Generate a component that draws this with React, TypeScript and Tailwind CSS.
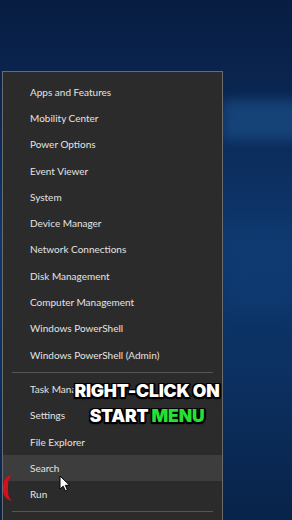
const topItems = [
  "Apps and Features",
  "Mobility Center",
  "Power Options",
  "Event Viewer",
  "System",
  "Device Manager",
  "Network Connections",
  "Disk Management",
  "Computer Management",
  "Windows PowerShell",
  "Windows PowerShell (Admin)",
];

const bottomItems = ["Task Manager", "Settings", "File Explorer", "Search", "Run"];

function Row({ label, active }: { label: string; active?: boolean }) {
  return (
    <div
      className={`flex h-[26.3px] items-center pl-[27px] text-[10px] text-[#e4e4e4] ${
        active ? "bg-[#3d3d3d]" : ""
      }`}
    >
      {label}
    </div>
  );
}

export default function App() {
  return (
    <div
      className="relative flex h-[520px] w-[292px] overflow-hidden bg-[linear-gradient(180deg,#081d42_0%,#0a2753_20%,#0e376c_45%,#0c3163_70%,#082349_100%)] pl-[2px] pt-[71px]"
      style={{ fontFamily: 'Lato, "Open Sans", sans-serif' }}
    >
      {/* lighter bands on the desktop */}
      <div className="absolute left-[222px] top-[100px] h-[40px] w-[80px] bg-[#1a4d86] opacity-70 blur-[6px]" />
      <div className="absolute left-[222px] top-[230px] h-[80px] w-[80px] bg-[#0f3d76] opacity-60 blur-[10px]" />

      {/* context menu */}
      <div className="relative flex h-[460px] w-[221px] flex-col border border-[#6b6b6b] bg-[#2b2b2b] pt-[7px]">
        {topItems.map((t) => (
          <Row key={t} label={t} />
        ))}
        <div className="mx-[9px] mb-[3px] mt-[4px] h-px bg-[#555]" />
        {bottomItems.map((t) => (
          <Row key={t} label={t} active={t === "Search"} />
        ))}
        <div className="mx-[9px] mt-[3px] h-px bg-[#555]" />
      </div>

      {/* red mark at the edge */}
      <div className="absolute left-[3px] top-[475px] h-[26px] w-[10px] rounded-l-full border-l-[5px] border-[#d3101b]" />

      {/* cursor */}
      <svg className="absolute left-[59px] top-[475px]" width="12" height="17" viewBox="0 0 12 17">
        <path d="M1 1 L1 14 L4.2 11.2 L6.4 16 L8.4 15 L6.3 10.3 L10.6 10.3 Z" fill="#fff" stroke="#000" strokeWidth="1" />
      </svg>

      {/* caption */}
      <div
        className="absolute left-[68px] top-[378px] w-[158px] text-center text-[17.5px] font-black uppercase leading-[25px] tracking-[-0.2px] text-white"
        style={{
          fontFamily: 'Inter, "Liberation Sans", sans-serif',
          textShadow:
            "1.5px 1.5px 0 #000, -1.5px 1.5px 0 #000, 1.5px -1.5px 0 #000, -1.5px -1.5px 0 #000, 0 2px 2px #000, 2px 0 0 #000",
        }}
      >
        <div>Right-click on</div>
        <div>
          Start <span className="text-[#27e034]">Menu</span>
        </div>
      </div>
    </div>
  );
}
